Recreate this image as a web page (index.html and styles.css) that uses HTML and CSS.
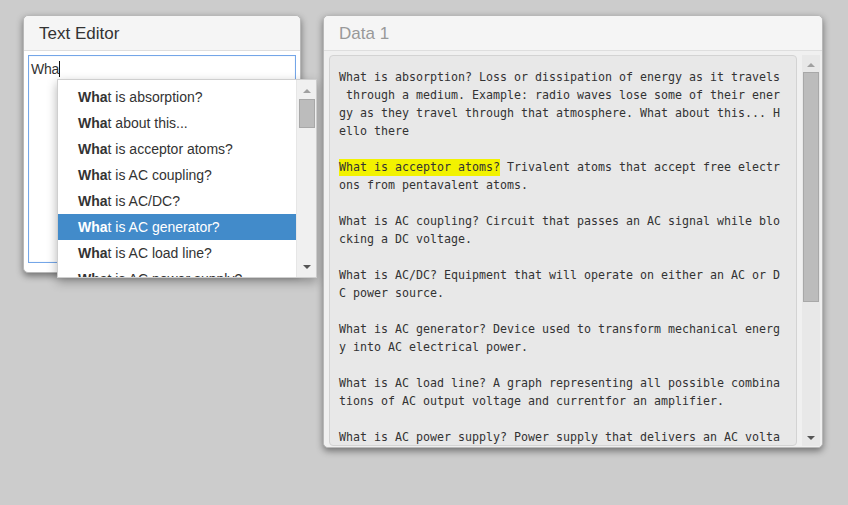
FILE: index.html
```html
<!DOCTYPE html>
<html>
<head>
<meta charset="utf-8">
<link rel="stylesheet" href="styles.css">
</head>
<body>
<div class="desk">
  <section class="panel editor">
    <header class="panel-head">Text Editor</header>
    <div class="panel-body">
      <div class="textarea"><span class="typed">Wha</span><span class="caret"></span></div>
    </div>
    <div class="dropdown">
      <ul class="items">
        <li><b>Wha</b>t is absorption?</li>
        <li><b>Wha</b>t about this...</li>
        <li><b>Wha</b>t is acceptor atoms?</li>
        <li><b>Wha</b>t is AC coupling?</li>
        <li><b>Wha</b>t is AC/DC?</li>
        <li class="active"><b>Wha</b>t is AC generator?</li>
        <li><b>Wha</b>t is AC load line?</li>
        <li><b>Wha</b>t is AC power supply?</li>
      </ul>
      <div class="scroll small">
        <span class="arrow up"></span>
        <span class="thumb"></span>
        <span class="fill"></span>
        <span class="arrow down"></span>
      </div>
    </div>
  </section>
  <section class="panel data">
    <header class="panel-head muted">Data 1</header>
    <div class="panel-body data-body">
      <div class="content">
        <p>What is absorption? Loss or dissipation of energy as it travels<br> through a medium. Example: radio waves lose some of their energy as they travel through that atmosphere. What about this... Hello there</p>
        <p><span class="hl">What is acceptor atoms?</span> Trivalent atoms that accept free electrons from pentavalent atoms.</p>
        <p>What is AC coupling? Circuit that passes an AC signal while blocking a DC voltage.</p>
        <p>What is AC/DC? Equipment that will operate on either an AC or DC power source.</p>
        <p>What is AC generator? Device used to transform mechanical energy into AC electrical power.</p>
        <p>What is AC load line? A graph representing all possible combinations of AC output voltage and currentfor an amplifier.</p>
        <p>What is AC power supply? Power supply that delivers an AC voltage.</p>
      </div>
      <div class="scroll big">
        <span class="arrow up"></span>
        <span class="thumb"></span>
        <span class="fill"></span>
        <span class="arrow down"></span>
      </div>
    </div>
  </section>
</div>
</body>
</html>
```
FILE: styles.css
```css
html, body {
  margin: 0;
  padding: 0;
  background: #cccccc;
  width: 848px;
  height: 505px;
  overflow: hidden;
  font-family: "Liberation Sans", Arial, sans-serif;
  color: #333333;
}

.desk {
  display: flex;
  align-items: flex-start;
  gap: 22px;
  padding: 15px 0 0 23px;
}

.panel {
  position: relative;
  background: #f5f5f5;
  border: 1px solid #b8b8b8;
  border-radius: 5px;
  box-shadow: 0 3px 7px rgba(0, 0, 0, 0.45);
  box-sizing: border-box;
  display: flex;
  flex-direction: column;
}

.panel-head {
  height: 35px;
  box-sizing: border-box;
  padding: 8px 0 0 15px;
  font-size: 17px;
  line-height: 20px;
  color: #333333;
  border-bottom: 1px solid #dedede;
  background: #f5f5f5;
  border-radius: 5px 5px 0 0;
}

.panel-head.muted {
  color: #999999;
}

.editor {
  width: 278px;
  height: 258px;
}

.editor .panel-body {
  flex: 1;
  background: #ffffff;
  padding: 4px 4px 9px 4px;
  border-radius: 0 0 5px 5px;
  display: flex;
}

.textarea {
  flex: 1;
  border: 1px solid #74a6e8;
  box-shadow: inset 0 0 1px rgba(102, 175, 233, 0.5);
  padding: 4px 2px;
  font-size: 14px;
  line-height: 18px;
  color: #333333;
  display: flex;
  align-items: flex-start;
}

.typed {
  letter-spacing: -0.2px;
}

.caret {
  display: inline-block;
  width: 1px;
  height: 16px;
  margin-top: 1px;
  background: #111111;
}

.dropdown {
  position: absolute;
  left: 33px;
  top: 63px;
  width: 260px;
  height: 199px;
  box-sizing: border-box;
  background: #ffffff;
  border: 1px solid #cfcfcf;
  box-shadow: 0 4px 10px rgba(0, 0, 0, 0.3);
  display: flex;
  overflow: hidden;
}

.items {
  list-style: none;
  margin: 0;
  padding: 4px 0 0 0;
  flex: 1;
}

.items li {
  height: 26px;
  line-height: 26px;
  padding-left: 20px;
  font-size: 14px;
  color: #333333;
  white-space: nowrap;
}

.items li b {
  font-weight: bold;
}

.items li.active {
  background: #428bca;
  color: #ffffff;
}

.scroll {
  display: flex;
  flex-direction: column;
  align-items: center;
  background: #f0f0f0;
  box-sizing: border-box;
}

.scroll.small {
  width: 20px;
  border-left: 1px solid #e6e6e6;
}

.arrow {
  width: 0;
  height: 0;
  border-left: 4px solid transparent;
  border-right: 4px solid transparent;
}

.arrow.up {
  border-bottom: 4px solid #a0a0a0;
  margin-top: 9px;
}

.arrow.down {
  border-top: 4px solid #555555;
  margin-bottom: 8px;
}

.thumb {
  background: #bcbcbc;
  border: 1px solid #a8a8a8;
  box-sizing: border-box;
}

.small .thumb {
  width: 16px;
  height: 29px;
  margin-top: 6px;
}

.fill {
  flex: 1;
}

.data {
  width: 500px;
  height: 433px;
}

.data-body {
  flex: 1;
  display: flex;
  padding: 4px 1px 1px 5px;
  background: #f0f0f0;
  border-radius: 0 0 5px 5px;
  min-height: 0;
}

.content {
  width: 468px;
  box-sizing: border-box;
  background: #e8e8e8;
  border: 1px solid #d3d3d3;
  border-radius: 4px;
  padding: 12px 0 0 9px;
  overflow: hidden;
  font-family: "DejaVu Sans Mono", "Liberation Mono", monospace;
  font-size: 11.63px;
  line-height: 18px;
  color: #333333;
}

.content p {
  margin: 0 0 18px 0;
  width: 444px;
  word-break: break-all;
  white-space: break-spaces;
}

.hl {
  background: #f2f200;
  padding: 1px 0 2px 0;
}

.scroll.big {
  width: 18px;
  margin-left: 5px;
  background: #e8e8e8;
}

.big .arrow.up {
  margin-top: 8px;
}

.big .thumb {
  width: 16px;
  height: 230px;
  margin-top: 5px;
}

.big .arrow.down {
  margin-bottom: 6px;
}
```
